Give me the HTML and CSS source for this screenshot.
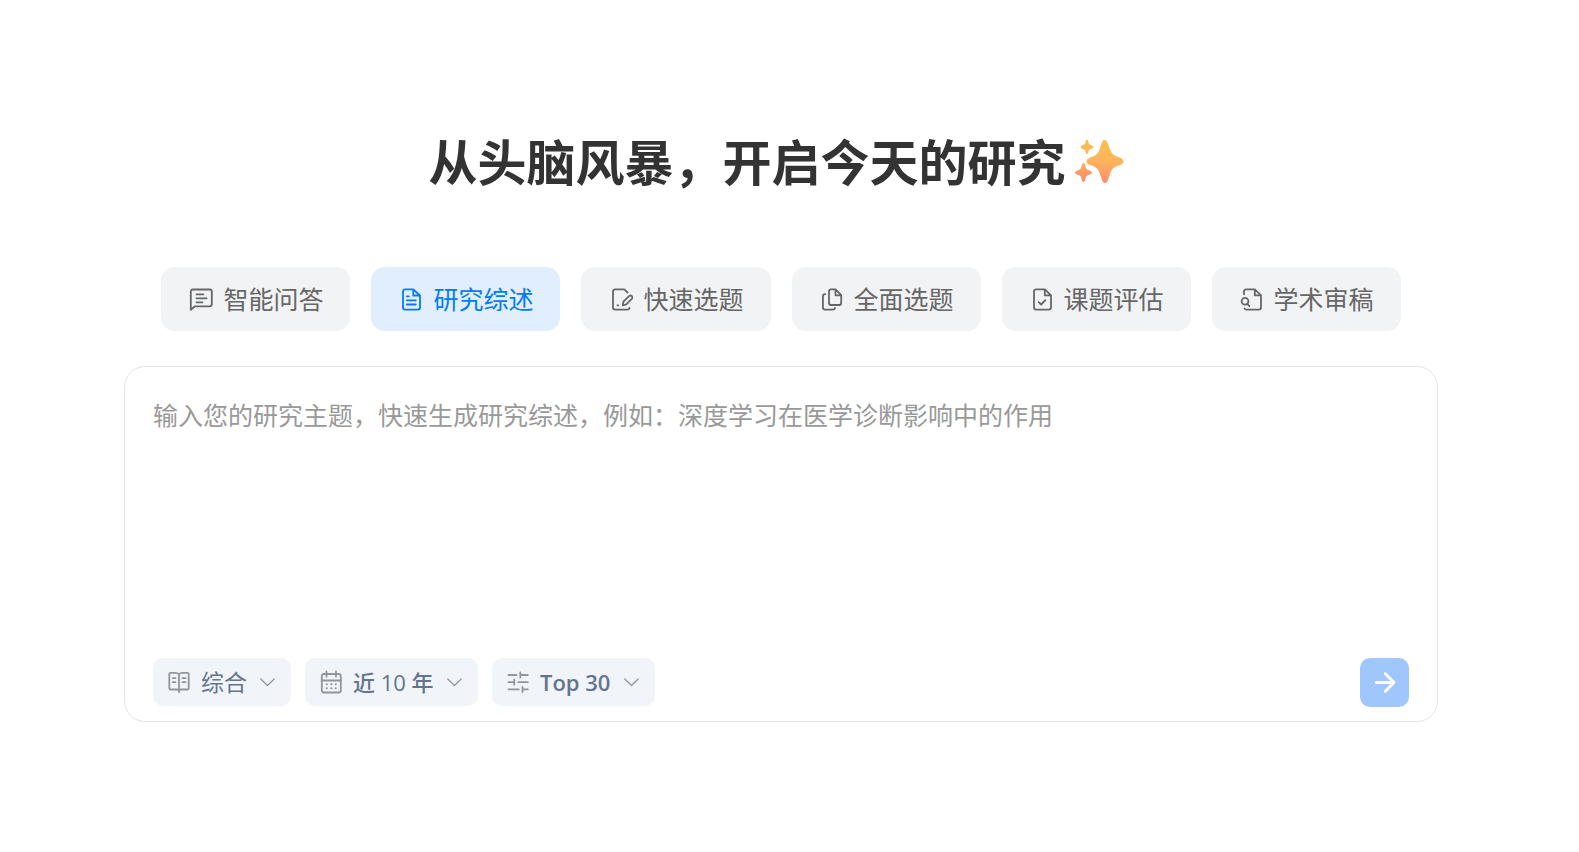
FILE: index.html
```
<!DOCTYPE html>
<html lang="zh-CN">
<head>
  <meta charset="UTF-8" />
  <title>研究综述</title>
  <link rel="stylesheet" href="styles.css">
</head>
<body>
  <main class="page">
    <h1 class="title">
      <span>从头脑风暴，开启今天的研究</span>
      <svg class="sparkles" viewBox="0 0 52 52" aria-hidden="true">
        <defs>
          <linearGradient id="spark" gradientUnits="userSpaceOnUse" x1="30" y1="4" x2="26" y2="47">
            <stop offset="0" stop-color="#f9bf50"/>
            <stop offset="0.5" stop-color="#feb35c"/>
            <stop offset="1" stop-color="#ff8a6c"/>
          </linearGradient>
        </defs>
        <g fill="url(#spark)">
          <path d="M31.500 4C33.500 4 34.500 6 35.500 9C37.500 15 38.500 18 43 20C48 22 50.500 23 50.500 25.500C50.500 28 48 28.500 43 30.500C39 32 38 35 36 41C34.500 45 34 47 32 47C30 47 29.200 45 28 41C26 35 25 32 21 30.500C16 28.500 13.500 28 13.500 25.500C13.500 23 16 22 21 20C25.500 18 26 15 28 9C29 6 29.500 4 31.500 4Z"/>
          <path d="M14 3.500C15 3.500 15.200 5.500 15.900 7.700C16.300 8.800 20.500 9.300 20.500 11C20.500 12.600 16.500 13 15.900 14.200C15.200 16.500 15 18 14 18C13 18 12.800 16.500 12.100 14.200C11.500 13 7.500 12.600 7.500 11C7.500 9.300 11.700 8.800 12.100 7.700C12.800 5.500 13 3.500 14 3.500Z"/>
          <path d="M10.500 27C12 27 12.200 30 13.200 32.400C13.900 34 19 34.500 19 36.600C19 38.500 14 39 13.200 40.800C12.200 43.200 12 46 10.500 46C9 46 8.800 43.200 7.800 40.800C7 39 2 38.500 2 36.600C2 34.500 7.100 34 7.800 32.400C8.800 30 9 27 10.500 27Z"/>
        </g>
      </svg>
    </h1>

    <nav class="tabs">
      <button type="button" class="tab">
        <svg class="icon" viewBox="0 0 25 25"><path d="M2.800 22.800V4.500a2 2 0 0 1 2-2h17a2 2 0 0 1 2 2v12.800a2 2 0 0 1-2 2H7zM8.500 7.300h7M8.500 11.300h10M8.500 15.300h6"/></svg>
        智能问答
      </button>
      <button type="button" class="tab active">
        <svg class="icon" viewBox="0 0 25 25"><path d="M15.300 2.300H7a2 2 0 0 0-2 2v16.300a2 2 0 0 0 2 2h13a2 2 0 0 0 2-2V8.500zM15.300 2.300v6.200H22M8.800 9.300h2M8.800 13.300h9M8.800 17.500h9"/></svg>
        研究综述
      </button>
      <button type="button" class="tab">
        <svg class="icon" viewBox="0 0 25 25"><path d="M19.500 5.500l-3.200-3.200H7a2 2 0 0 0-2 2v16.300a2 2 0 0 0 2 2h12.500c1.200 0 1.800-.6 2-1.600M9.500 18.300h.8M14.800 18.300l.6-3.700 5.700-5.500a1.900 1.900 0 0 1 2.700 2.700l-5.500 5.600z"/></svg>
        快速选题
      </button>
      <button type="button" class="tab">
        <svg class="icon" viewBox="0 0 25 25"><path d="M16.500 2.300H12a2 2 0 0 0-2 2V16a2 2 0 0 0 2 2h8.200a2 2 0 0 0 2-2V8.200zM16.500 2.300v6h5.700M6.300 7.200c-1.500 0-2.400.8-2.400 2.200v11.200a2 2 0 0 0 2 2h8c1.200 0 1.900-.6 2.100-1.600"/></svg>
        全面选题
      </button>
      <button type="button" class="tab">
        <svg class="icon" viewBox="0 0 25 25"><path d="M15.800 2.300H7a2 2 0 0 0-2 2v16.300a2 2 0 0 0 2 2h13a2 2 0 0 0 2-2V8.300zM15.800 2.300v6H22M9.700 15.200l2.400 2.300 4.300-4.400"/></svg>
        课题评估
      </button>
      <button type="button" class="tab">
        <svg class="icon" viewBox="0 0 25 25"><path d="M5 7.300v-3a2 2 0 0 1 2-2h8.800L22 8.300v12.300a2 2 0 0 1-2 2H7.500c-1 0-1.700-.4-2-1.100M15.800 2.300v6H22M8.200 16.800l2.200 2.400"/><circle cx="6" cy="14.200" r="3.400"/></svg>
        学术审稿
      </button>
    </nav>

    <form class="card">
      <textarea class="prompt" rows="6" aria-label="研究主题" placeholder="输入您的研究主题，快速生成研究综述，例如：深度学习在医学诊断影响中的作用"></textarea>
      <div class="toolbar">
        <label class="chip">
          <svg class="chip-icon" viewBox="0 0 24 24"><path d="M12 4.800C11.500 3.500 10.500 2.800 9 2.800H3.500a1.200 1.200 0 0 0-1.200 1.200v14.300a1.200 1.200 0 0 0 1.200 1.200H9.500c1.500 0 2.500.5 2.500 1.500 0-1 1-1.500 2.500-1.500h6a1.200 1.200 0 0 0 1.200-1.200V4a1.200 1.200 0 0 0-1.200-1.200H15c-1.500 0-2.500.7-3 2zM12 4.800v17.500M5.800 8.200h2.700M5.800 12.200h2.700M15.500 8.200h3M15.500 12.200h3"/></svg>
          <select class="chip-select" aria-label="类型"><option>综合</option></select>
          <svg class="chevron" viewBox="0 0 15 9"><path d="M.8 1l6.700 6.500L14.200 1"/></svg>
        </label>
        <label class="chip">
          <svg class="chip-icon" viewBox="0 0 24 24"><rect x="2.800" y="4" width="19" height="18.500" rx="2"/><path d="M2.800 10.500h19M7.500 1.500v5M17 1.500v5"/><path class="dots" d="M7.700 14.300h.1M12.200 14.300h.1M16.700 14.300h.1M7.700 18.300h.1M12.200 18.300h.1M16.700 18.300h.1"/></svg>
          <select class="chip-select year" aria-label="年份"><option>近 10 年</option></select>
          <svg class="chevron" viewBox="0 0 15 9"><path d="M.8 1l6.700 6.500L14.200 1"/></svg>
        </label>
        <label class="chip">
          <svg class="chip-icon" viewBox="0 0 24 24"><path d="M2.500 5h8M14.300 5h7.500M14.300 2.500v5M2.500 12.200h5.700M8.200 9.700v5M12.300 12.200h9.500M2.500 19.400h10.300M16.500 16.900v5M16.500 19.400h5.300"/></svg>
          <select class="chip-select limit" aria-label="数量"><option>Top 30</option></select>
          <svg class="chevron" viewBox="0 0 15 9"><path d="M.8 1l6.700 6.500L14.200 1"/></svg>
        </label>
        <button type="submit" class="send" aria-label="发送">
          <svg class="arrow" viewBox="0 0 24 24"><path d="M3.300 11.500h17M12.300 2.800l8.700 8.700-8.700 8.700"/></svg>
        </button>
      </div>
    </form>
  </main>
</body>
</html>
```
FILE: styles.css
```
* { box-sizing: border-box; }
body { margin: 0; background: #fff; font-family: "Open Sans", "Noto Sans CJK SC", sans-serif; }
button, select, textarea { font-family: inherit; border: 0; }
svg { flex: none; fill: none; stroke: currentColor; stroke-linecap: round; stroke-linejoin: round; }

.page { margin-right: 17px; padding: 126px 124px 48px; }

.title { display: flex; align-items: center; justify-content: center; gap: 7px; margin: 0 0 69px; padding-right: 9px; color: #333; font-size: 49px; line-height: 72px; font-weight: 700; }
.sparkles { width: 52px; height: 52px; stroke: none; }

.tabs { display: flex; justify-content: center; gap: 21px; margin-bottom: 35px; }
.tab { display: flex; align-items: center; gap: 10px; height: 64px; padding: 0 27px; border-radius: 14px; background: #f2f3f5; color: #666; font-size: 25px; line-height: 36px; white-space: nowrap; cursor: pointer; }
.tab.active { background: #e0eefd; color: #007aff; }
.icon { width: 25px; height: 25px; stroke-width: 1.8; }

.card { padding: 28px 28px 14px; border: 1px solid #e5e6eb; border-radius: 21px; background: #fff; }
.prompt { display: block; width: 100%; margin-bottom: 23px; padding: 0; resize: none; outline: 0; background: none; color: #333; font-size: 25px; line-height: 40px; }
.prompt::placeholder { color: #999; }

.toolbar { display: flex; align-items: flex-start; gap: 14px; }
.chip { display: flex; align-items: center; height: 48px; padding: 0 16px 0 14px; border-radius: 10px; background: #f1f4f9; color: #909699; }
.chip-icon { width: 24px; height: 24px; margin-right: 10px; stroke-width: 1.8; }
.chip-icon .dots { stroke-width: 2; }
.chip-select { appearance: none; height: 48px; padding: 0; outline: 0; background: none; color: #64748b; font-size: 23px; cursor: pointer; }
.year { font-size: 22px; font-weight: 500; }
.limit { font-size: 22px; font-weight: 600; }
.chevron { width: 15px; height: 9px; margin-left: 13px; stroke-width: 1.2; }

.send { display: flex; align-items: center; justify-content: center; width: 49px; height: 49px; margin-left: auto; padding: 0; border-radius: 10px; background: #a0c7fd; color: #fff; cursor: pointer; }
.arrow { width: 24px; height: 24px; stroke-width: 3; }
```
